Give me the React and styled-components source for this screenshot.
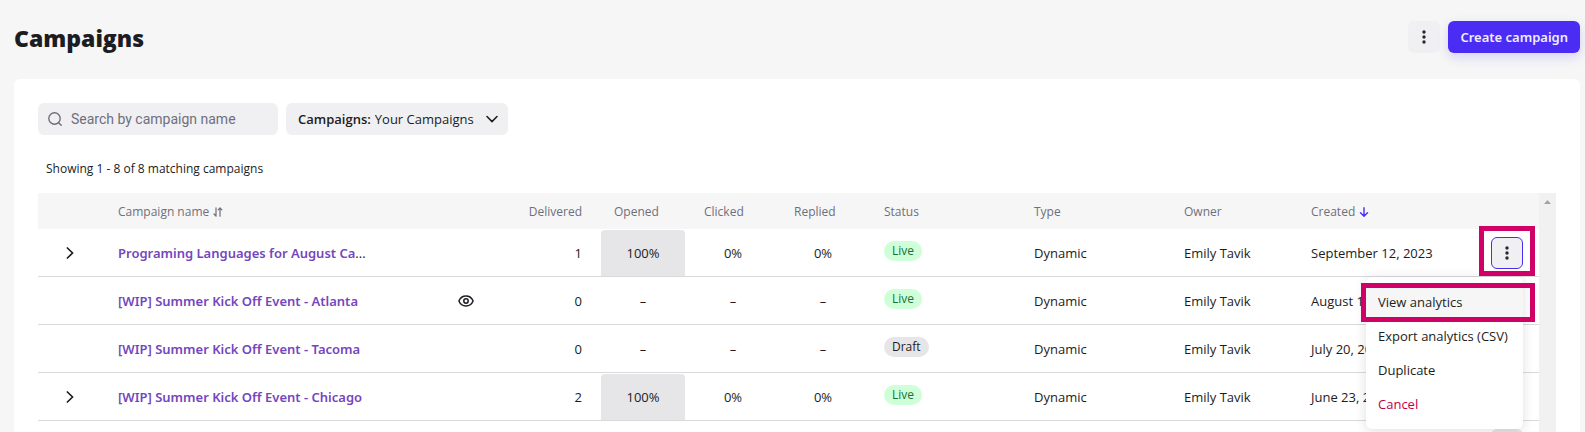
import React from "react";
import styled, { createGlobalStyle, css } from "styled-components";

const GlobalStyle = createGlobalStyle`
  *, *::before, *::after { box-sizing: border-box; }
  body {
    margin: 0;
    background: #f6f6f6;
    color: #1c1c22;
    font-family: "Segoe UI", "Open Sans", "Noto Sans", sans-serif;
    font-size: 13px;
    line-height: 20px;
  }
  button, input, select { font: inherit; color: inherit; border: 0; margin: 0; padding: 0; }
  button { cursor: pointer; }
`;

const Page = styled.div`
  display: flex;
  flex-direction: column;
  height: 100vh;
  padding: 0 5px 0 14px;
  overflow: hidden;
`;

const PageHeader = styled.header`
  display: flex;
  align-items: center;
  gap: 8px;
  padding: 21px 0 26px;
`;

const Title = styled.h1`
  flex: 1;
  margin: 0;
  padding-top: 2px;
  font-size: 23px;
  line-height: 30px;
  font-weight: 800;
`;

const IconButton = styled.button`
  display: flex;
  align-items: center;
  justify-content: center;
  width: 32px;
  height: 32px;
  border-radius: 6px;
  background: ${(p) => (p.$muted ? "#e6e6e9" : "#f0f0f3")};
  ${(p) => p.$active && css`border: 1px solid #4a2cf5;`}
`;

const PrimaryButton = styled.button`
  height: 32px;
  padding: 0 12px;
  border-radius: 6px;
  background: #4a2cf5;
  color: #f0edff;
  font-family: "Segoe UI", "Noto Sans", sans-serif;
  font-weight: 600;
  box-shadow: 0 4px 12px rgba(74, 44, 245, 0.18);
`;

const Card = styled.main`
  display: flex;
  flex-direction: column;
  flex: 1;
  min-height: 0;
  padding: 24px 24px 0;
  border-radius: 6px 6px 0 0;
  background: #fff;
`;

const Filters = styled.div`
  display: flex;
  gap: 8px;
`;

const Field = styled.label`
  display: flex;
  align-items: center;
  height: 32px;
  border-radius: 6px;
  background: #f0f0f3;
`;

const SearchField = styled(Field)`
  gap: 9px;
  width: 240px;
  padding: 0 10px;
  color: #6f6f7c;
`;

const SearchInput = styled.input`
  flex: 1;
  min-width: 0;
  background: none;
  outline: none;
  font-family: Roboto, sans-serif;
  font-size: 14px;
  &::placeholder { color: #6f6f7c; opacity: 1; }
`;

const SelectField = styled(Field)`
  width: 222px;
  gap: 4px;
  padding: 0 10px 0 12px;
`;

const SelectLabel = styled.span`
  font-weight: 600;
`;

const Select = styled.select`
  flex: 1;
  min-width: 0;
  appearance: none;
  background: none;
  outline: none;
`;

const Summary = styled.p`
  margin: 0;
  padding: 24px 8px 14px;
  font-size: 12px;
`;

const Medium = styled.span`
  font-weight: 500;
`;

const TableArea = styled.div`
  display: flex;
  flex: 1;
  min-height: 0;
  overflow: hidden;
`;

const TableView = styled.div`
  flex: 1;
  min-width: 0;
`;

const ScrollTrack = styled.div`
  display: flex;
  justify-content: center;
  width: 17px;
  padding-top: 7px;
  background: #f1f1f1;
`;

const Table = styled.table`
  width: 100%;
  table-layout: fixed;
  border-collapse: separate;
  border-spacing: 0;
`;

const Col = styled.col`
  width: ${(p) => (p.$width ? `${p.$width}px` : "auto")};
`;

const HeadCell = styled.th`
  height: 36px;
  padding: 2px 16px 0;
  background: #f6f6f6;
  color: #6f6f7c;
  font-size: 12px;
  font-weight: 500;
  text-align: ${(p) => p.$align || "left"};
  white-space: nowrap;
`;

const HeadContent = styled.span`
  display: flex;
  align-items: center;
  gap: 4px;
`;

const Cell = styled.td`
  position: relative;
  height: 48px;
  padding: 0 16px;
  border-bottom: 1px solid #d9d9dc;
  text-align: ${(p) => p.$align || "left"};
  white-space: nowrap;
`;

const CenterCell = styled(Cell)`
  padding: 1px 3px 0;
  text-align: center;
`;

const IconCell = styled(Cell)`
  padding: 0;
  text-align: center;
  svg { display: block; margin: 0 auto; }
`;

const StatusCell = styled(Cell)`
  padding-bottom: 4px;
`;

const ExpandButton = styled.button`
  display: block;
  width: 32px;
  height: 32px;
  margin: 0 auto;
  background: none;
`;

const CampaignLink = styled.a`
  color: #7546bd;
  font-family: "Segoe UI", "Noto Sans", sans-serif;
  font-weight: 600;
  text-decoration: none;
`;

const Rate = styled.div`
  display: flex;
  align-items: center;
  justify-content: center;
  height: 46px;
  border-radius: 4px 4px 0 0;
  background: ${(p) => (p.$filled ? "#e6e6e9" : "transparent")};
`;

const Badge = styled.span`
  display: block;
  width: fit-content;
  height: 20px;
  padding: 0 8px;
  border-radius: 10px;
  background: ${(p) => (p.$live ? "#cfffd8" : "#e6e6e9")};
  color: ${(p) => (p.$live ? "#1b7039" : "#1c1c22")};
  font-size: 12px;
  line-height: 20px;
`;

const Menu = styled.div`
  position: absolute;
  top: 48px;
  right: 16px;
  z-index: 2;
  width: 157px;
  padding: 8px 0;
  border-radius: 6px;
  background: #fff;
  box-shadow: 0 2px 12px rgba(28, 28, 34, 0.14);
`;

const MenuItem = styled.button`
  display: block;
  position: relative;
  width: 100%;
  height: 34px;
  padding: 0 12px;
  background: ${(p) => (p.$hovered ? "#f6f6f6" : "transparent")};
  color: ${(p) => (p.$danger ? "#c00045" : "inherit")};
  text-align: left;
  white-space: nowrap;
`;

const Highlight = styled.span`
  position: absolute;
  z-index: 3;
  inset: ${(p) => p.$inset};
  border: 5px solid #cf0066;
  pointer-events: none;
`;

const Kebab = () => (
  <svg width="16" height="16" viewBox="0 0 16 16" fill="#28282e" aria-hidden="true">
    <circle cx="8" cy="3" r="1.7" />
    <circle cx="8" cy="8" r="1.7" />
    <circle cx="8" cy="13" r="1.7" />
  </svg>
);

const SearchIcon = () => (
  <svg width="14" height="14" viewBox="0 0 14 14" fill="none" stroke="currentColor" strokeWidth="1.4" strokeLinecap="round" aria-hidden="true">
    <circle cx="6.500" cy="6.500" r="5.700" />
    <path d="M10.700 10.700 13.200 13.200" />
  </svg>
);

const ChevronDown = () => (
  <svg width="12" height="8" viewBox="0 0 12 8" fill="none" stroke="#1c1c22" strokeWidth="1.500" strokeLinecap="round" strokeLinejoin="round" aria-hidden="true">
    <path d="M1 1.500 6 6.600 11 1.500" />
  </svg>
);

const ChevronRight = () => (
  <svg width="8" height="12" viewBox="0 0 8 12" fill="none" stroke="#1c1c22" strokeWidth="1.700" strokeLinecap="round" strokeLinejoin="round" aria-hidden="true">
    <path d="M1.400 1 6.600 6 1.400 11" />
  </svg>
);

const SortIcon = () => (
  <svg width="10" height="10" viewBox="0 0 10 10" fill="none" stroke="#6f6f7c" strokeWidth="1.200" strokeLinecap="round" strokeLinejoin="round" aria-hidden="true">
    <path d="M3 .8v8.200M1 7l2 2.200M7 9.200V1M5.200 2.800 7 .8l1.900 2" />
  </svg>
);

const ArrowDown = () => (
  <svg width="10" height="10" viewBox="0 0 10 10" fill="none" stroke="#4a2cf5" strokeWidth="1.400" strokeLinecap="round" strokeLinejoin="round" aria-hidden="true">
    <path d="M5 .8v8.200M1.500 5.700 5 9.200l3.500-3.500" />
  </svg>
);

const EyeIcon = () => (
  <svg width="16" height="12" viewBox="0 0 16 12" fill="none" stroke="#1c1c22" strokeWidth="1.500" aria-hidden="true">
    <path d="M.9 6C2.300 2.700 4.900 1 8 1s5.700 1.700 7.100 5C13.700 9.300 11.100 11 8 11S2.300 9.300.9 6Z" />
    <circle cx="8" cy="6" r="2.200" />
  </svg>
);

const ScrollArrow = () => (
  <svg width="7" height="4" viewBox="0 0 7 4" fill="#a3a3a3" aria-hidden="true">
    <path d="M3.500 0 7 4H0Z" />
  </svg>
);

const campaigns = [
  { name: "Programing Languages for August Ca", shortened: true, expandable: true, delivered: 1, rates: ["100%", "0%", "0%"], status: "Live", created: "September 12, 2023", open: true },
  { name: "[WIP] Summer Kick Off Event - Atlanta", watched: true, delivered: 0, rates: ["–", "–", "–"], status: "Live", created: "August 1" },
  { name: "[WIP] Summer Kick Off Event - Tacoma", delivered: 0, rates: ["–", "–", "–"], status: "Draft", created: "July 20, 2023" },
  { name: "[WIP] Summer Kick Off Event - Chicago", expandable: true, delivered: 2, rates: ["100%", "0%", "0%"], status: "Live", created: "June 23, 2023" },
];

function ActionsMenu() {
  return (
    <Menu role="menu">
      <MenuItem role="menuitem" $hovered>
        View analytics
        <Highlight $inset="-2px -12px -3px -5px" />
      </MenuItem>
      <MenuItem role="menuitem">Export analytics (CSV)</MenuItem>
      <MenuItem role="menuitem">Duplicate</MenuItem>
      <MenuItem role="menuitem" $danger>Cancel</MenuItem>
    </Menu>
  );
}

function CampaignRow({ campaign }) {
  const { name, shortened, expandable, watched, delivered, rates, status, created, open } = campaign;
  return (
    <tr>
      <IconCell>
        {expandable && (
          <ExpandButton aria-label="Expand"><ChevronRight /></ExpandButton>
        )}
      </IconCell>
      <Cell><CampaignLink href="#">{name}</CampaignLink>{shortened && "..."}</Cell>
      <IconCell>{watched && <EyeIcon />}</IconCell>
      <Cell $align="right">{delivered}</Cell>
      {rates.map((rate, i) => (
        <CenterCell key={i}><Rate $filled={rate === "100%"}>{rate}</Rate></CenterCell>
      ))}
      <StatusCell><Badge $live={status === "Live"}>{status}</Badge></StatusCell>
      <Cell>Dynamic</Cell>
      <Cell>Emily Tavik</Cell>
      <Cell>{created}</Cell>
      <Cell>
        <IconButton aria-label="Campaign actions" $active={open}><Kebab /></IconButton>
        {open && <Highlight $inset="-3px 4px 0 4px" />}
        {open && <ActionsMenu />}
      </Cell>
    </tr>
  );
}

export default function App() {
  return (
    <>
      <GlobalStyle />
      <Page>
        <PageHeader>
          <Title>Campaigns</Title>
          <IconButton aria-label="More options"><Kebab /></IconButton>
          <PrimaryButton>Create campaign</PrimaryButton>
        </PageHeader>
        <Card>
          <Filters>
            <SearchField>
              <SearchIcon />
              <SearchInput type="text" aria-label="Search" placeholder="Search by campaign name" />
            </SearchField>
            <SelectField>
              <SelectLabel>Campaigns:</SelectLabel>
              <Select><option>Your Campaigns</option></Select>
              <ChevronDown />
            </SelectField>
          </Filters>
          <Summary><Medium>Showing 1 - 8</Medium> of 8 matching campaigns</Summary>
          <TableArea>
            <TableView>
              <Table>
                <colgroup>
                  <Col $width={64} />
                  <Col />
                  <Col $width={84} />
                  <Col $width={90} />
                  <Col $width={90} />
                  <Col $width={90} />
                  <Col $width={90} />
                  <Col $width={150} />
                  <Col $width={150} />
                  <Col $width={127} />
                  <Col $width={180} />
                  <Col $width={64} />
                </colgroup>
                <thead>
                  <tr>
                    <HeadCell />
                    <HeadCell colSpan={2}><HeadContent>Campaign name <SortIcon /></HeadContent></HeadCell>
                    <HeadCell $align="right">Delivered</HeadCell>
                    <HeadCell>Opened</HeadCell>
                    <HeadCell>Clicked</HeadCell>
                    <HeadCell>Replied</HeadCell>
                    <HeadCell>Status</HeadCell>
                    <HeadCell>Type</HeadCell>
                    <HeadCell>Owner</HeadCell>
                    <HeadCell><HeadContent>Created <ArrowDown /></HeadContent></HeadCell>
                    <HeadCell />
                  </tr>
                </thead>
                <tbody>
                  {campaigns.map((campaign) => (
                    <CampaignRow key={campaign.name} campaign={campaign} />
                  ))}
                  <tr>
                    <Cell colSpan={11} />
                    <Cell><IconButton aria-label="Campaign actions" $muted><Kebab /></IconButton></Cell>
                  </tr>
                </tbody>
              </Table>
            </TableView>
            <ScrollTrack><ScrollArrow /></ScrollTrack>
          </TableArea>
        </Card>
      </Page>
    </>
  );
}
